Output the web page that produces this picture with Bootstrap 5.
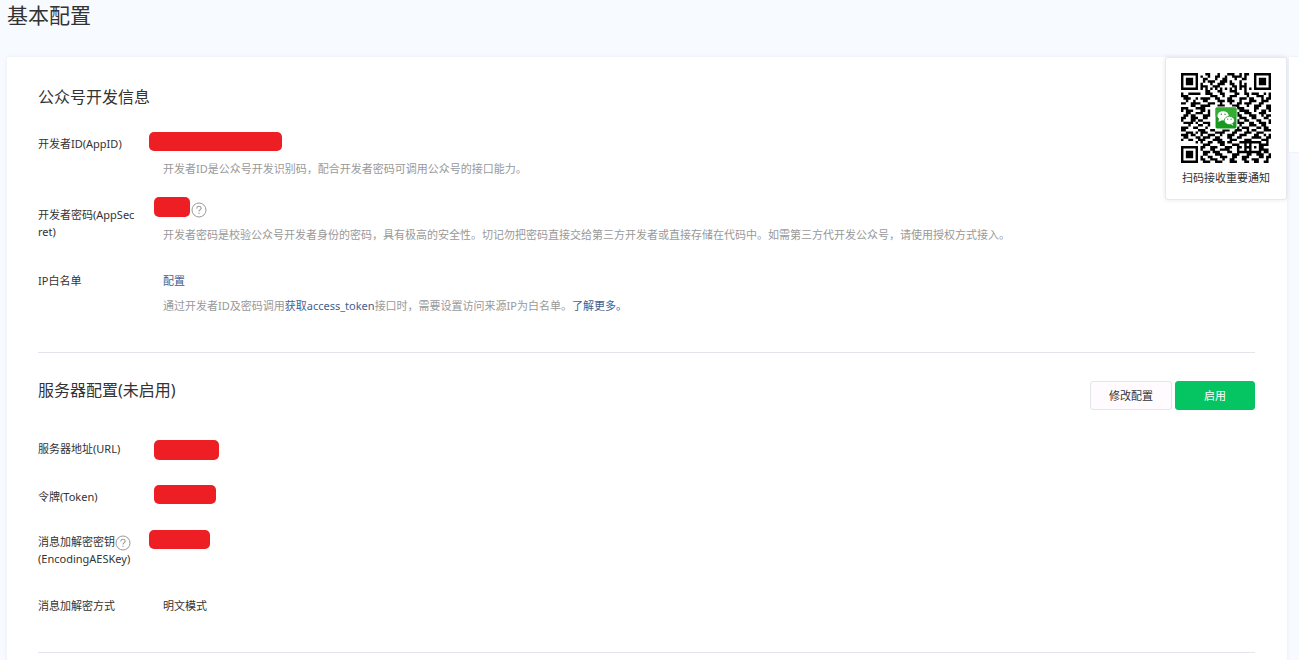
<!DOCTYPE html>
<html lang="zh-CN">
<head>
<meta charset="utf-8">
<meta name="viewport" content="width=device-width, initial-scale=1">
<title>基本配置</title>
<link href="https://cdn.jsdelivr.net/npm/bootstrap@5.3.0/dist/css/bootstrap.min.css" rel="stylesheet">
<style>
body{background:#f7faff;color:#333;font:11px/17px "Noto Sans","Noto Sans CJK SC",sans-serif}
a{color:#44608f;text-decoration:none}
h1{font-size:21px;line-height:30px;margin:0 0 27px}
h2{font-size:16px;line-height:24px;margin:0}
h1,h2{font-weight:400;color:#333}
.shell{padding:0 12px 0 7px}
.panel{background:#fff;min-height:calc(100vh - 57px);padding:28px 32px 7px 31px;box-shadow:0 0 4px #e8ecf2;border-radius:2px}
.rule{border:0;border-top:1px solid #e4e5ec;opacity:1;margin:38px 0 0}
.fields{display:flex;flex-direction:column}
.account{gap:20px;padding-top:23px}
.server{gap:25px;padding-top:30px}
.server-head{padding-top:25px}
.server-actions{gap:3px;padding-top:3px}
.field-label{width:99px;margin-right:12px;word-break:break-all;flex:none}
.drop{padding-top:3px}
.drop-more{padding-top:9px}
.field-value{flex:1;min-width:0}
.indent{padding-left:14px}
.hint{color:#999;margin:0;padding-top:9px}
.whitelist{padding-top:9px}
.whitelist .hint{padding-top:8px}
.mode{padding-top:2px}
.mask{display:block;background:#ee1e25;border-radius:5px;height:19px}
.mask-id{width:133px}
.mask-secret{width:36px;height:20px}
.mask-url{width:65px;height:20px}
.mask-token{width:62px}
.mask-key{width:61px}
.shift{margin-left:5px}
.help{width:16px;height:16px;display:inline-block;vertical-align:top;flex:none}
.field-label .help{margin-top:2px;margin-bottom:-2px}
.help-side{margin:5px 0 -5px 1px}
.act{font-size:11px;line-height:17px;height:29px;padding:5px 0;border-radius:3px}
.act-edit{width:82px;background:#fffbff;border:1px solid #e4e5ec;color:#333}
.act-on{width:80px;background:#04c562;border:1px solid #04c562;color:#fff}
.act-edit:hover{background:#f6f6fa}
.act-on:hover{background:#05ad57;color:#fff}
.scan{top:57px;right:12px;width:122px;padding:15px 15px 13px;background:#fff;border:1px solid #e7e7f0;border-radius:3px;box-shadow:0 0 4px #e8e4ec}
.scan svg{width:90px;height:90px;display:block}
.scan-text{padding-top:6px}
.side-tab{top:57px;right:0;width:10px;height:95px;background:#fff;box-shadow:0 0 2px #e4e8ee}
</style>
</head>
<body>
<svg width="0" height="0" class="position-absolute"><symbol id="q" viewBox="0 0 16 16"><circle cx="8" cy="8" r="7" fill="none" stroke="#999"/><path d="M5.8 6.6V6q.2-1.7 2.2-1.7T10.2 6q0 1-1.1 1.7T8 9.4M8 10.7v1.2" fill="none" stroke="#999" stroke-width="1.1"/></symbol></svg>
<main class="shell position-relative">
<h1>基本配置</h1>
<div class="panel">
  <section>
    <h2>公众号开发信息</h2>
    <div class="fields account">
      <div class="d-flex">
        <div class="field-label drop">开发者ID(AppID)</div>
        <div class="field-value"><span class="mask mask-id"></span><p class="hint indent">开发者ID是公众号开发识别码，配合开发者密码可调用公众号的接口能力。</p></div>
      </div>
      <div class="d-flex">
        <div class="field-label drop-more">开发者密码(AppSecret)</div>
        <div class="field-value"><div class="d-flex align-items-start shift"><span class="mask mask-secret"></span><svg class="help help-side" viewBox="0 0 16 16"><use href="#q"/></svg></div><p class="hint indent">开发者密码是校验公众号开发者身份的密码，具有极高的安全性。切记勿把密码直接交给第三方开发者或直接存储在代码中。如需第三方代开发公众号，请使用授权方式接入。</p></div>
      </div>
      <div class="d-flex whitelist">
        <div class="field-label">IP白名单</div>
        <div class="field-value indent"><a href="#">配置</a><p class="hint">通过开发者ID及密码调用<a href="#">获取access_token</a>接口时，需要设置访问来源IP为白名单。<a href="#">了解更多。</a></p></div>
      </div>
    </div>
  </section>
  <hr class="rule">
  <section>
    <div class="server-head d-flex justify-content-between">
      <h2>服务器配置(未启用)</h2>
      <div class="server-actions d-flex"><button type="button" class="btn act act-edit">修改配置</button><button type="button" class="btn act act-on">启用</button></div>
    </div>
    <div class="fields server">
      <div class="d-flex">
        <div class="field-label">服务器地址(URL)</div>
        <div class="field-value"><span class="mask mask-url shift"></span></div>
      </div>
      <div class="d-flex">
        <div class="field-label drop">令牌(Token)</div>
        <div class="field-value"><span class="mask mask-token shift"></span></div>
      </div>
      <div class="d-flex">
        <div class="field-label drop">消息加解密密钥<svg class="help" viewBox="0 0 16 16"><use href="#q"/></svg><br>(EncodingAESKey)</div>
        <div class="field-value"><span class="mask mask-key"></span></div>
      </div>
      <div class="d-flex mode">
        <div class="field-label drop">消息加解密方式</div>
        <div class="field-value indent drop">明文模式</div>
      </div>
    </div>
  </section>
  <hr class="rule">
</div>
<aside class="scan position-absolute text-center">
  <svg viewBox="0 0 37 37" role="img" aria-label="二维码">
    <path id="modules" fill="#000"/>
    <rect x="13.8" y="13.8" width="9.4" height="9.4" rx="1" fill="#fff"/>
    <rect x="14.2" y="14.2" width="8.6" height="8.6" rx=".6" fill="#16991c"/>
    <rect x="14.2" y="14.2" width="8.6" height="4" rx=".6" fill="#35ad35"/>
    <g fill="#fff"><ellipse cx="17.3" cy="17.6" rx="2.3" ry="1.9"/><path d="M15.7 18.6l-.4 1.5 1.7-.8zM21 20.4l.5 1.3-1.6-.8z"/><ellipse cx="19.9" cy="19.5" rx="2.1" ry="1.7" stroke="#16991c" stroke-width=".3"/></g>
    <g fill="#16991c"><circle cx="16.6" cy="17" r=".3"/><circle cx="18.1" cy="17" r=".3"/><circle cx="19.2" cy="19" r=".25"/><circle cx="20.6" cy="19" r=".25"/></g>
  </svg>
  <div class="scan-text text-nowrap">扫码接收重要通知</div>
</aside>
<div class="side-tab position-absolute"></div>
</main>
<script>
// QR modules, version 5 (37 x 37): data rows with the fixed patterns laid on top
const rows=`
0000000000110001000111001011000000000
0000000010010011001001111010000000000
0000000001100010011000100110000000000
0000000001011100111010001000000000000
0000000010001001110011001010000000000
0000000011100111000001101110000000000
0000000000000000000000000000000000000
0000000000110001100011100010000000000
1001110100111000110000110011011100101
1110001000001110010011100001000111001
0111000011110011000110001110110001011
0010011001100001110111001000111001110
1100111100011100100010011011100011000
0000110011110001110001110001001110011
1110000111000000000000011100001100011
1011100011010000000000001111001001101
0011000110010000000000010011100011100
0110111001110000000000011000111001011
1100110001100000000000001110011000110
1000111110000000000000010011000110001
0111100001110000000000011100110011101
0001001110010000000000001000111001100
1110011000100000000000010111000110110
1100001111001100011100111001011000111
0011100011100011110001100011100111000
1110110010011100100111001110001100101
0110001101110011000110011000011110011
1001100111000111100011100011100001110
0000000010011001110110001111111110010
0000000001110000110001110010001001110
0000000011001110001110011011011011000
0000000010001100111100010010001001110
0000000001110111000110011111111100110
0000000001100011100001110001100111001
0000000010011000111001100111000011011
0000000011001110010011000110011100010
0000000001110011100011100011001100110`.trim().split('\n');
const reach=(x,y,cx,cy)=>Math.max(Math.abs(x-cx),Math.abs(y-cy));
let d='';
rows.forEach((row,y)=>{for(let x=0;x<37;x++){
  let on=row[x]==='1';
  if((y===6||x===6)&&Math.max(x,y)>7&&Math.max(x,y)<29)on=(x+y)%2===0;
  for(const [cx,cy] of [[3,3],[33,3],[3,33]]){const r=reach(x,y,cx,cy);if(r<5)on=r===3||r<2}
  const a=reach(x,y,30,30);if(a<3)on=a!==1;
  if(on)d+=`M${x} ${y}h1v1h-1z`;
}});
document.getElementById('modules').setAttribute('d',d);
</script>
<script src="https://cdn.jsdelivr.net/npm/bootstrap@5.3.0/dist/js/bootstrap.bundle.min.js"></script>
</body>
</html>
